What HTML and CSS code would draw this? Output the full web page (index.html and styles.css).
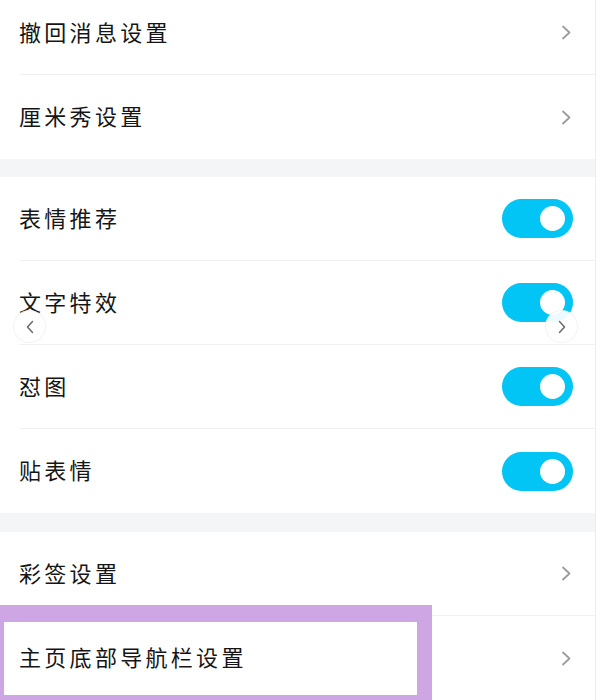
FILE: index.html
```html
<!DOCTYPE html>
<html lang="zh-CN">
<head>
<meta charset="utf-8">
<title>设置</title>
<link rel="stylesheet" href="styles.css">
</head>
<body>
<div class="page">
  <div class="list">
    <div class="group">
      <div class="row"><span class="label">撤回消息设置</span>
        <svg class="chev" width="10" height="15" viewBox="0 0 10 15"><polyline points="2,1.5 8.5,7.5 2,13.5"/></svg></div>
      <div class="row"><span class="label">厘米秀设置</span>
        <svg class="chev" width="10" height="15" viewBox="0 0 10 15"><polyline points="2,1.5 8.5,7.5 2,13.5"/></svg></div>
    </div>
    <div class="gap"></div>
    <div class="group">
      <div class="row"><span class="label">表情推荐</span><span class="toggle"><span class="knob"></span></span></div>
      <div class="row"><span class="label">文字特效</span><span class="toggle"><span class="knob"></span></span></div>
      <div class="row"><span class="label">怼图</span><span class="toggle"><span class="knob"></span></span></div>
      <div class="row"><span class="label">贴表情</span><span class="toggle"><span class="knob"></span></span></div>
    </div>
    <div class="gap gap-b"></div>
    <div class="group">
      <div class="row"><span class="label">彩签设置</span>
        <svg class="chev" width="10" height="15" viewBox="0 0 10 15"><polyline points="2,1.5 8.5,7.5 2,13.5"/></svg></div>
      <div class="row last"><span class="label">主页底部导航栏设置</span>
        <svg class="chev" width="10" height="15" viewBox="0 0 10 15"><polyline points="2,1.5 8.5,7.5 2,13.5"/></svg>
        <span class="highlight"></span></div>
    </div>
  </div>
  <span class="nav nav-left"><svg width="10" height="14" viewBox="0 0 10 14"><polyline points="7.5,1.5 2.5,7 7.5,12.5"/></svg></span>
  <span class="nav nav-right"><svg width="10" height="14" viewBox="0 0 10 14"><polyline points="2.5,1.5 7.5,7 2.5,12.5"/></svg></span>
</div>
</body>
</html>
```
FILE: styles.css
```css
html, body {
  margin: 0;
  padding: 0;
  background: #ffffff;
  width: 600px;
  height: 700px;
  overflow: hidden;
}

.page {
  position: relative;
  width: 600px;
  height: 700px;
  overflow: hidden;
  font-family: "Noto Sans CJK SC", "Noto Sans", sans-serif;
}

.list {
  width: 595px;
  margin-top: -9px;
  border-right: 1px solid #ececee;
  background: #ffffff;
}

.group {
  display: flex;
  flex-direction: column;
}

.row {
  position: relative;
  height: 84px;
  box-sizing: border-box;
  display: flex;
  align-items: center;
  justify-content: space-between;
  margin-left: 20px;
  padding: 0 22px 0 0;
  border-bottom: 1px solid #eff0f2;
}

.row:last-child {
  border-bottom: none;
}

.label {
  margin-left: -1px;
  margin-bottom: 4px;
  font-size: 22px;
  letter-spacing: 3.3px;
  color: #151515;
  line-height: 1;
}

.chev {
  margin-right: 2px;
}

.chev polyline {
  fill: none;
  stroke: #9c9c9c;
  stroke-width: 1.8;
  stroke-linecap: round;
  stroke-linejoin: round;
}

.gap {
  height: 18px;
  background: #f4f5f7;
}

.gap-b {
  height: 19px;
}

.toggle {
  display: flex;
  align-items: center;
  justify-content: flex-end;
  width: 71px;
  height: 39px;
  box-sizing: border-box;
  padding-right: 8px;
  border-radius: 20px;
  background: #02c4f5;
}

.knob {
  width: 25px;
  height: 25px;
  border-radius: 50%;
  background: #ffffff;
}

.highlight {
  position: absolute;
  left: -20px;
  top: -11px;
  width: 432px;
  height: 95px;
  box-sizing: border-box;
  border-style: solid;
  border-color: #cea6e4;
  border-width: 17px 15px 5px 4px;
  pointer-events: none;
}

.nav {
  position: absolute;
  top: 310px;
  width: 33px;
  height: 33px;
  box-sizing: border-box;
  border-radius: 50%;
  background: rgba(255, 255, 255, 0.92);
  border: 1px solid rgba(0, 0, 0, 0.05);
  display: flex;
  align-items: center;
  justify-content: center;
}

.nav-left {
  left: 13px;
}

.nav-right {
  left: 545px;
}

.nav polyline {
  fill: none;
  stroke: #6a6a6a;
  stroke-width: 1.5;
  stroke-linecap: round;
  stroke-linejoin: round;
}
```
